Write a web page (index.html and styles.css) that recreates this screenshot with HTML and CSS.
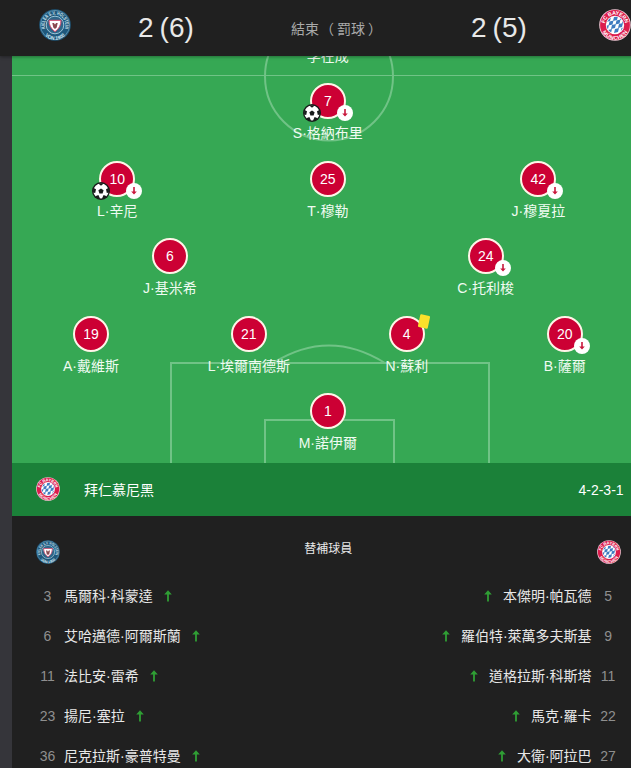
FILE: index.html
```html
<!DOCTYPE html>
<html lang="zh-Hant">
<head>
<meta charset="utf-8">
<title>拜仁慕尼黑</title>
<link rel="stylesheet" href="styles.css">
</head>
<body>
<svg class="defs" aria-hidden="true">
  <defs>
    <path id="arc-top" d="M5.800 17.500a10.300 10.300 0 1 1 20.400 0"/>
    <path id="arc-bottom" d="M2.200 17a13.800 13.800 0 0 0 27.600 0"/>
    <path id="arc-long" d="M6.300 19.500a10.300 10.300 0 1 1 19.400 0"/>
    <clipPath id="disc"><circle cx="16" cy="16" r="8.400"/></clipPath>
    <symbol id="kiel" viewBox="0 0 32 32">
      <circle cx="16" cy="16" r="15.800" fill="#1f587c"/>
      <circle cx="16" cy="16" r="14.600" fill="none" stroke="#8fc0d8" stroke-width=".5"/>
      <text class="crest-text" fill="#d3e8f2" font-size="5"><textPath href="#arc-long" textLength="39" lengthAdjust="spacingAndGlyphs">KIELER S.V. HOLSTEIN</textPath></text>
      <text class="crest-text" fill="#d3e8f2" font-size="4.800"><textPath href="#arc-bottom" startOffset="50%" text-anchor="middle">VON 1900</textPath></text>
      <circle cx="16" cy="16" r="8.800" fill="#2e6688" stroke="#a9cfe0" stroke-width=".9"/>
      <path d="M10 11.300h12q.2 7-6 11.400-6.200-4.400-6-11.400z" fill="#fff" stroke="#d04468" stroke-width="1"/>
      <path d="M13.300 14h1.600l1.100 1.500 1.100-1.500h1.600l-1 4.500-1.700 1.500-1.700-1.500z" fill="#8a4a50"/>
    </symbol>
    <symbol id="bayern" viewBox="0 0 32 32">
      <circle cx="16" cy="16" r="15.800" fill="#f4c9d6"/>
      <circle cx="16" cy="16" r="14.900" fill="#dc1c4c"/>
      <text class="crest-text" fill="#fff" font-size="5.400"><textPath href="#arc-top" startOffset="50%" text-anchor="middle" textLength="29">FC BAYERN</textPath></text>
      <text class="crest-text" fill="#fff" font-size="5.400"><textPath href="#arc-bottom" startOffset="50%" text-anchor="middle" textLength="31">MÜNCHEN</textPath></text>
      <circle cx="16" cy="16" r="9.200" fill="#fff"/>
      <g clip-path="url(#disc)" fill="#3f7cc0">
        <path d="M8 9l4-1-1 4-4 1zM15 8l4-1-1 4-4 1zM22 7l4-1-1 4-4 1zM10.500 12.500l4-1-1 4-4 1zM17.500 11.500l4-1-1 4-4 1zM24 10.500l4-1-1 4-4 1zM6 17l4-1-1 4-4 1zM13 16l4-1-1 4-4 1zM20 15l4-1-1 4-4 1zM9 21l4-1-1 4-4 1zM16 20l4-1-1 4-4 1zM22.500 19l4-1-1 4-4 1z"/>
      </g>
    </symbol>
    <symbol id="ball" viewBox="0 0 18 18">
      <circle cx="9" cy="9" r="9" fill="#171b1a"/>
      <circle cx="9" cy="9" r="7.600" fill="#fff"/>
      <g fill="#171b1a"><path d="M9 6.400l2.600 1.900-1 3.100H7.400l-1-3.100z"/><path d="M6 1.300h6L9 3.800zM1.200 5.800L4 7.200 3.200 10.900 1 10.400zM16.800 5.800L14 7.200l.8 3.700 2.200-.5zM3.300 14.300l3.100-1.300 1.700 3.700-2.700.3zM14.700 14.300l-3.100-1.300-1.700 3.700 2.700.3z"/></g>
    </symbol>
    <symbol id="down" viewBox="0 0 16 16">
      <circle cx="8" cy="8" r="8" fill="#fff"/>
      <path d="M7.200 4h1.600v4.500h2L8 11.600 5.200 8.500h2z" fill="#c9173c"/>
    </symbol>
    <symbol id="up" viewBox="0 0 8 12">
      <path d="M3.100 11.500V4.600H.2L4 .3l3.800 4.300H4.900v6.900z" fill="#2f9e34"/>
    </symbol>
  </defs>
</svg>

<header class="scorebar">
  <svg class="crest home-crest"><use href="#kiel"/></svg>
  <div class="score home-score"><span>2</span><span>(6)</span></div>
  <div class="status"><span>結束</span><span class="open">（</span><span>罰球</span><span class="close">）</span></div>
  <div class="score away-score"><span>2</span><span>(5)</span></div>
  <svg class="crest away-crest"><use href="#bayern"/></svg>
</header>

<main class="card">
  <section class="pitch">
    <svg class="markings" viewBox="0 0 632 407">
      <path d="M0 19.500H632" stroke-width="1"/>
      <circle cx="317" cy="20.500" r="64"/>
      <path d="M159 407V307H477V407M253 407V364H382V407M261 307Q317 272 373 307"/>
    </svg>
    <div class="line opponent"><div class="player"><span class="name">李在成</span></div></div>
    <div class="line">
      <div class="player"><span class="shirt">7<svg class="goal"><use href="#ball"/></svg><svg class="off"><use href="#down"/></svg></span><span class="name">S·格納布里</span></div>
    </div>
    <div class="line">
      <div class="player"><span class="shirt">10<svg class="goal"><use href="#ball"/></svg><svg class="off"><use href="#down"/></svg></span><span class="name">L·辛尼</span></div>
      <div class="player"><span class="shirt">25</span><span class="name">T·穆勒</span></div>
      <div class="player"><span class="shirt">42<svg class="off"><use href="#down"/></svg></span><span class="name">J·穆夏拉</span></div>
    </div>
    <div class="line">
      <div class="player"><span class="shirt">6</span><span class="name">J·基米希</span></div>
      <div class="player"><span class="shirt">24<svg class="off"><use href="#down"/></svg></span><span class="name">C·托利梭</span></div>
    </div>
    <div class="line">
      <div class="player"><span class="shirt">19</span><span class="name">A·戴維斯</span></div>
      <div class="player"><span class="shirt">21</span><span class="name">L·埃爾南德斯</span></div>
      <div class="player"><span class="shirt">4<i class="booking"></i></span><span class="name">N·蘇利</span></div>
      <div class="player"><span class="shirt">20<svg class="off"><use href="#down"/></svg></span><span class="name">B·薩爾</span></div>
    </div>
    <div class="line">
      <div class="player"><span class="shirt">1</span><span class="name">M·諾伊爾</span></div>
    </div>
  </section>

  <div class="teambar">
    <svg class="crest-sm"><use href="#bayern"/></svg>
    <span class="team">拜仁慕尼黑</span>
    <span class="formation">4-2-3-1</span>
  </div>

  <section class="bench">
    <div class="bench-head">
      <svg class="crest-sm"><use href="#kiel"/></svg>
      <span class="bench-title">替補球員</span>
      <svg class="crest-sm"><use href="#bayern"/></svg>
    </div>
    <div class="subs">
      <ul class="sub-list">
        <li><b>3</b><span>馬爾科·科蒙達</span><svg><use href="#up"/></svg></li>
        <li><b>6</b><span>艾哈邁德·阿爾斯蘭</span><svg><use href="#up"/></svg></li>
        <li><b>11</b><span>法比安·雷希</span><svg><use href="#up"/></svg></li>
        <li><b>23</b><span>揚尼·塞拉</span><svg><use href="#up"/></svg></li>
        <li><b>36</b><span>尼克拉斯·豪普特曼</span><svg><use href="#up"/></svg></li>
      </ul>
      <ul class="sub-list away">
        <li><b>5</b><span>本傑明·帕瓦德</span><svg><use href="#up"/></svg></li>
        <li><b>9</b><span>羅伯特·萊萬多夫斯基</span><svg><use href="#up"/></svg></li>
        <li><b>11</b><span>道格拉斯·科斯塔</span><svg><use href="#up"/></svg></li>
        <li><b>22</b><span>馬克·羅卡</span><svg><use href="#up"/></svg></li>
        <li><b>27</b><span>大衛·阿拉巴</span><svg><use href="#up"/></svg></li>
      </ul>
    </div>
  </section>
</main>
</body>
</html>
```
FILE: styles.css
```css
* { box-sizing: border-box; }
html, body { height: 768px; overflow: hidden; }
body {
  margin: 0;
  background: #35353a;
  color: #e8e8e8;
  font: 14px/20px "Liberation Sans", "Noto Sans CJK TC", sans-serif;
}
svg { display: block; flex: none; }
.defs { position: absolute; width: 0; height: 0; }
.crest-text { font-family: "Liberation Sans", sans-serif; font-weight: bold; }

.scorebar {
  position: relative;
  z-index: 2;
  display: flex;
  align-items: flex-start;
  width: 656px;
  height: 56px;
  padding-left: 39px;
  background: #202020;
  box-shadow: 0 1px 3px rgba(0, 0, 0, .35);
}
.crest { width: 32px; height: 32px; margin-top: 9px; }
.score {
  display: flex;
  gap: 6px;
  margin-top: 12px;
  font-size: 28px;
  line-height: 32px;
}
.home-score { margin-left: 67px; width: 153px; }
.status { display: flex; width: 180px; margin-top: 19px; color: #a9a9a9; }
.open { margin: 0 3px 0 1px; }
.close { margin-left: 3px; }
.away-score { width: 128px; }

.card { width: 631.6px; margin-left: 12px; background: #202020; }

.pitch {
  position: relative;
  height: 407px;
  background: #36a854;
  overflow: hidden;
}
.markings {
  position: absolute;
  inset: 0;
  width: 632px;
  height: 407px;
  fill: none;
  stroke: #70c386;
  stroke-width: 2;
}
.line { position: relative; display: flex; height: 77.5px; }
.line.opponent { height: 27px; }
.opponent .player { margin-top: -10px; }
.player { flex: 1; display: flex; flex-direction: column; align-items: center; }
.shirt {
  position: relative;
  width: 36px;
  height: 36px;
  margin-bottom: 4px;
  border: 2px solid #fff4e8;
  border-radius: 50%;
  background: #cc0034;
  color: #fff;
  line-height: 32px;
  text-align: center;
}
.name { color: #f0fbf2; white-space: nowrap; }
.goal { position: absolute; left: -9px; top: 19px; width: 18px; height: 18px; }
.off { position: absolute; left: 25px; top: 20px; width: 16px; height: 16px; }
.booking {
  position: absolute;
  left: 28px;
  top: -3px;
  width: 10px;
  height: 13px;
  border-radius: 1px;
  background: #fce12b;
  transform: rotate(12deg);
}

.teambar {
  display: flex;
  align-items: center;
  height: 53px;
  padding: 0 20px 0 24px;
  background: #1b8139;
  color: #fff;
}
.crest-sm { width: 24px; height: 24px; }
.teambar .crest-sm { margin-top: -2px; }
.team { margin-left: 24px; }
.formation { margin-left: auto; }

.bench { height: 252px; }
.bench-head {
  display: flex;
  justify-content: space-between;
  align-items: center;
  height: 60px;
  padding: 12px 23px 0 24px;
}
.bench-title { font-size: 12px; line-height: 16px; margin-bottom: 6px; }
.subs { display: flex; justify-content: space-between; padding: 0 24px; }
.sub-list { margin: 0; padding: 0; list-style: none; }
.sub-list li { display: flex; align-items: center; height: 40px; }
.sub-list b { width: 23px; font-weight: normal; text-align: center; color: #8f8f8f; }
.sub-list span { margin: 0 11px 0 5px; }
.sub-list svg { width: 8px; height: 12px; }
.away li { flex-direction: row-reverse; }
.away span { margin: 0 5px 0 11px; }
```
